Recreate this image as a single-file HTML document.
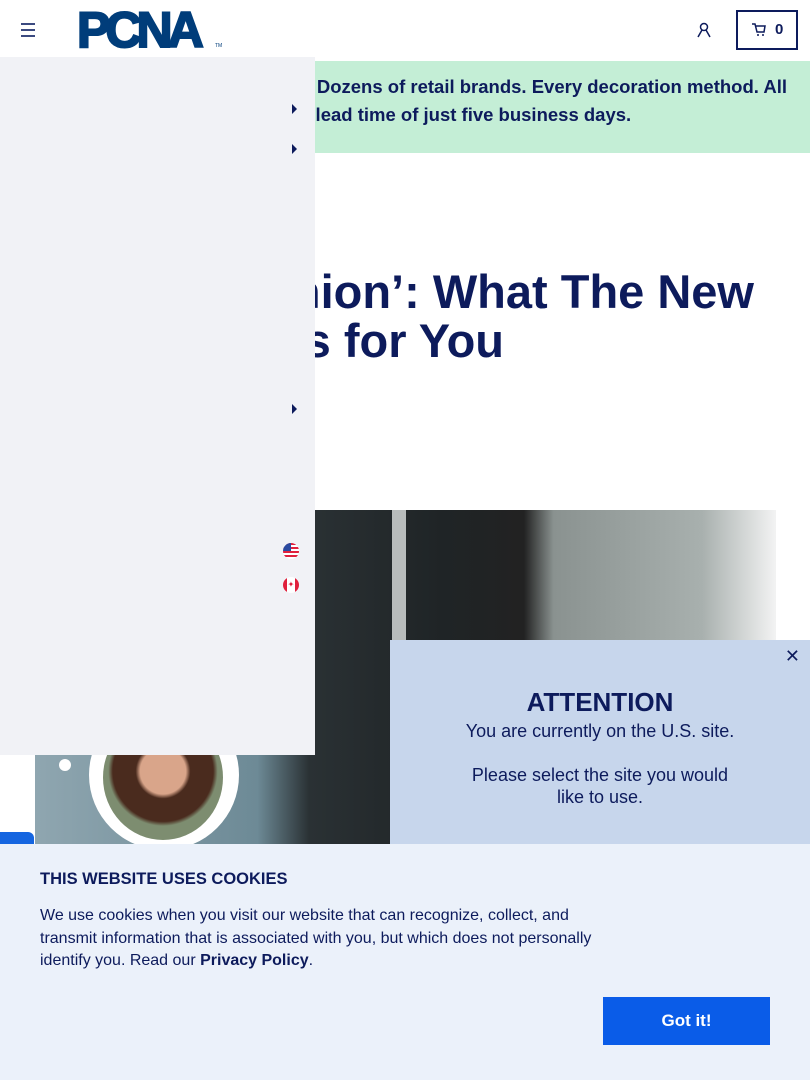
<!DOCTYPE html>
<html><head><meta charset="utf-8"><style>
*{margin:0;padding:0;box-sizing:border-box}
body{width:810px;height:1080px;overflow:hidden;position:relative;background:#fff;font-family:"Liberation Sans",sans-serif;color:#0d1b5c}
#w{position:absolute;left:0;top:0;width:810px;height:1080px;overflow:hidden}
.abs{position:absolute}
</style></head><body><div id="w">
<!-- header -->
<div class="abs" style="left:21px;top:23px;width:14px">
<div style="height:2px;background:#3b4a80;margin-bottom:4px"></div><div style="height:2px;background:#3b4a80;margin-bottom:4px"></div><div style="height:2px;background:#3b4a80"></div></div>
<div class="abs" style="left:77px;top:5px;font:900 50px/50px 'Liberation Sans',sans-serif;color:#003d7a;letter-spacing:-5px;-webkit-text-stroke:2px #003d7a">PCNA</div>
<div class="abs" style="left:215px;top:43px;font-size:5px;color:#003d7a">TM</div>
<svg class="abs" style="left:697px;top:22px" width="14" height="16" viewBox="0 0 14 16"><circle cx="7" cy="5" r="3.5" fill="none" stroke="#0d1b5c" stroke-width="1.5"/><path d="M1 15 L5 8 M13 15 L9 8" stroke="#0d1b5c" stroke-width="1.5"/></svg>
<div class="abs" style="left:736px;top:10px;width:62px;height:40px;border:2px solid #0d1b5c"></div>
<svg class="abs" style="left:752px;top:23px" width="14" height="14" viewBox="0 0 14 14"><path d="M0 1h3l2 8h7l1-6H4" fill="none" stroke="#0d1b5c" stroke-width="1.5"/><circle cx="6" cy="12" r="1" fill="#0d1b5c"/><circle cx="11" cy="12" r="1" fill="#0d1b5c"/></svg>
<div class="abs" style="left:775px;top:21px;font:bold 15px 'Liberation Sans',sans-serif">0</div>
<!-- green banner -->
<div class="abs" style="left:0;top:61px;width:810px;height:92px;background:#c4eed6"></div>
<div class="abs" style="right:23px;top:73px;white-space:nowrap;font:bold 18.5px/28px 'Liberation Sans',sans-serif">Thousands of products. Dozens of retail brands. Every decoration method. All</div>
<div class="abs" style="left:258px;top:101px;white-space:nowrap;font:bold 18.5px/28px 'Liberation Sans',sans-serif">with a lead time of just five business days.</div>
<!-- title -->
<div class="abs" style="right:56px;top:267px;white-space:nowrap;font:bold 47px/50px 'Liberation Sans',sans-serif">‘Sustainable Fashion’: What The New</div>
<div class="abs" style="right:306px;top:316px;white-space:nowrap;font:bold 47px/50px 'Liberation Sans',sans-serif">Law Means for You</div>
<!-- hero image -->
<div class="abs" style="left:35px;top:510px;width:741px;height:334px;background:linear-gradient(90deg,#8fa6b0 0%,#6d8a96 30%,#2a3134 37%,#1f2426 55%,#222 66%,#8a9290 70%,#a8b0ae 90%,#f3f3f3 100%)"></div>
<div class="abs" style="left:392px;top:510px;width:14px;height:334px;background:#b8bcbc"></div>
<div class="abs" style="left:89px;top:700px;width:150px;height:150px;border-radius:50%;background:#fff"></div>
<div class="abs" style="left:103px;top:715px;width:120px;height:125px;border-radius:50%;background:radial-gradient(circle at 50% 45%,#d9a58a 0 25%,#4a2b1e 30% 55%,#7d8d70 60%)"></div>
<div class="abs" style="left:59px;top:759px;width:12px;height:12px;border-radius:50%;background:#fff"></div>
<!-- side panel -->
<div class="abs" style="left:0;top:57px;width:315px;height:698px;background:#f1f2f6"></div>
<div class="abs" style="left:292px;top:104px;border-left:5px solid #0d1b5c;border-top:5px solid transparent;border-bottom:5px solid transparent"></div>
<div class="abs" style="left:292px;top:144px;border-left:5px solid #0d1b5c;border-top:5px solid transparent;border-bottom:5px solid transparent"></div>
<div class="abs" style="left:292px;top:404px;border-left:5px solid #0d1b5c;border-top:5px solid transparent;border-bottom:5px solid transparent"></div>
<div class="abs" style="left:283px;top:543px;width:16px;height:16px;border-radius:50%;background:repeating-linear-gradient(#e0203c 0 2px,#fff 2px 4px);overflow:hidden"><div style="width:8px;height:8px;background:#2a4aa0"></div></div>
<div class="abs" style="left:283px;top:577px;width:16px;height:16px;border-radius:50%;background:linear-gradient(90deg,#e0203c 0 4px,#fff 4px 12px,#e0203c 12px);color:#e0203c;font-size:8px;text-align:center;line-height:16px">✦</div>
<!-- attention popup -->
<div class="abs" style="left:390px;top:640px;width:420px;height:204px;background:#c7d6ec;text-align:center">
<div class="abs" style="right:10px;top:6px;font-size:18px">✕</div>
<div style="margin-top:47px;font:bold 26px/30px 'Liberation Sans',sans-serif">ATTENTION</div>
<div style="margin-top:3px;font:18px/22px 'Liberation Sans',sans-serif">You are currently on the U.S. site.<br><br>Please select the site you would<br>like to use.</div>
</div>
<div class="abs" style="left:0;top:832px;width:34px;height:20px;background:#1565e0;border-radius:0 6px 0 0"></div>
<!-- cookie -->
<div class="abs" style="left:0;top:844px;width:810px;height:236px;background:#ebf1fa"></div>
<div class="abs" style="left:40px;top:870px;font:bold 16.5px 'Liberation Sans',sans-serif">THIS WEBSITE USES COOKIES</div>
<div class="abs" style="left:40px;top:905px;width:560px;font:16px/22.5px 'Liberation Sans',sans-serif">We use cookies when you visit our website that can recognize, collect, and transmit information that is associated with you, but which does not personally identify you. Read our <b>Privacy Policy</b>.</div>
<div class="abs" style="left:603px;top:997px;width:167px;height:48px;background:#0a5ce8;color:#fff;font:bold 17px/48px 'Liberation Sans',sans-serif;text-align:center">Got it!</div>
</div></body></html>
